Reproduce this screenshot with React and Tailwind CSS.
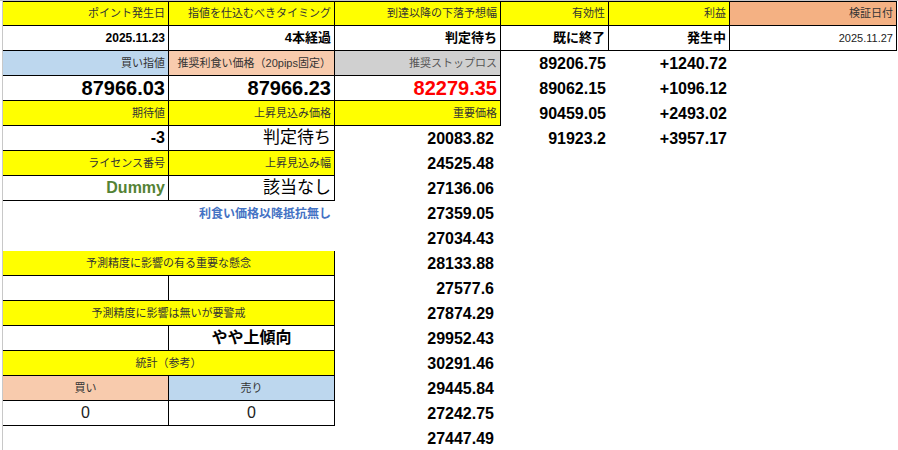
const Y = "bg-[#ffff00]";
const font = { fontFamily: '"Liberation Sans","Noto Sans CJK JP",sans-serif' };

function C({ span = 1, bg = "", b = true, center = false, cls = "", children }) {
  return (
    <div
      className={`flex items-center ${center ? "justify-center" : "justify-end"} px-[3px] whitespace-nowrap overflow-hidden ${bg} ${
        b ? "border-r border-b border-black" : ""
      } ${cls}`}
      style={{ gridColumn: `span ${span}` }}
    >
      {children}
    </div>
  );
}

const hd = "text-[11px] text-[#333]";
const big = "text-[20px] font-bold";
const num = "text-[16px] font-bold";

export default function App() {
  const prices = [
    "20083.82", "24525.48", "27136.06", "27359.05", "27034.43", "28133.88",
    "27577.6", "27874.29", "29952.43", "30291.46", "29445.84", "27242.75", "27447.49",
  ];
  const side = [
    ["89206.75", "+1240.72"],
    ["89062.15", "+1096.12"],
    ["90459.05", "+2493.02"],
    ["91923.2", "+3957.17"],
  ];
  const left = [
    [<C cls={num}>-3</C>, <C cls="text-[17px]">判定待ち</C>],
    [<C bg={Y} cls={hd}>ライセンス番号</C>, <C bg={Y} cls={hd}>上昇見込み幅</C>],
    [<C cls={`${num} text-[#548235]`}>Dummy</C>, <C cls="text-[17px]">該当なし</C>],
    [<C span={2} b={false} cls="text-[12px] font-bold text-[#4472c4] pr-[4px]">利食い価格以降抵抗無し</C>],
    [<C span={2} b={false} />],
    [<C span={2} bg={Y} center cls={hd}>予測精度に影響の有る重要な懸念</C>],
    [<C />, <C />],
    [<C span={2} bg={Y} center cls={hd}>予測精度に影響は無いが要警戒</C>],
    [<C />, <C center cls="text-[16px] font-bold">やや上傾向</C>],
    [<C span={2} bg={Y} center cls={hd}>統計（参考）</C>],
    [<C bg="bg-[#f8cbad]" center cls={hd}>買い</C>, <C bg="bg-[#bdd7ee]" center cls={hd}>売り</C>],
    [<C center cls="text-[16px] text-[#222]">0</C>, <C center cls="text-[16px] text-[#222]">0</C>],
    [<C span={2} b={false} />],
  ];

  return (
    <div className="w-[898px] h-[450px] bg-white overflow-hidden border-t border-[#c8c8c8]" style={font}>
      <div className="ml-[2px] border-l border-[#c8c8c8] h-full">
        <div className="grid grid-cols-[166px_166px_166px_108px_121px_167px] auto-rows-[25px] text-black">
          <C bg={Y} cls={`${hd} border-t`}>ポイント発生日</C>
          <C bg={Y} cls={`${hd} border-t`}>指値を仕込むべきタイミング</C>
          <C bg={Y} cls={`${hd} border-t`}>到達以降の下落予想幅</C>
          <C bg={Y} cls={`${hd} border-t`}>有効性</C>
          <C bg={Y} cls={`${hd} border-t`}>利益</C>
          <C bg="bg-[#f4b183]" cls={`${hd} border-t`}>検証日付</C>

          <C cls="text-[12px] font-bold">2025.11.23</C>
          <C cls="text-[13px] font-bold">4本経過</C>
          <C cls="text-[13px] font-bold">判定待ち</C>
          <C cls="text-[13px] font-bold">既に終了</C>
          <C cls="text-[13px] font-bold">発生中</C>
          <C cls="text-[11px] text-[#222]">2025.11.27</C>

          <C bg="bg-[#bdd7ee]" cls={hd}>買い指値</C>
          <C bg="bg-[#f8cbad]" cls={hd}>推奨利食い価格（20pips固定）</C>
          <C bg="bg-[#d0d0d0]" cls="text-[11px] text-[#555]">推奨ストップロス</C>
          <C b={false} cls={num}>{side[0][0]}</C>
          <C b={false} cls={num}>{side[0][1]}</C>
          <C b={false} />

          <C cls={big}>87966.03</C>
          <C cls={big}>87966.23</C>
          <C cls={`${big} text-[#ff0000]`}>82279.35</C>
          <C b={false} cls={num}>{side[1][0]}</C>
          <C b={false} cls={num}>{side[1][1]}</C>
          <C b={false} />

          <C bg={Y} cls={hd}>期待値</C>
          <C bg={Y} cls={hd}>上昇見込み価格</C>
          <C bg={Y} cls={hd}>重要価格</C>
          <C b={false} cls={num}>{side[2][0]}</C>
          <C b={false} cls={num}>{side[2][1]}</C>
          <C b={false} />
          {left.map((cells, i) => (
            <div key={i} className="contents">
              {cells}
              <C b={false} cls={`${num} pr-[7px]`}>{prices[i]}</C>
              <C b={false} cls={num}>{i === 0 ? side[3][0] : ""}</C>
              <C b={false} cls={num}>{i === 0 ? side[3][1] : ""}</C>
              <C b={false} />
            </div>
          ))}
        </div>
      </div>
    </div>
  );
}
